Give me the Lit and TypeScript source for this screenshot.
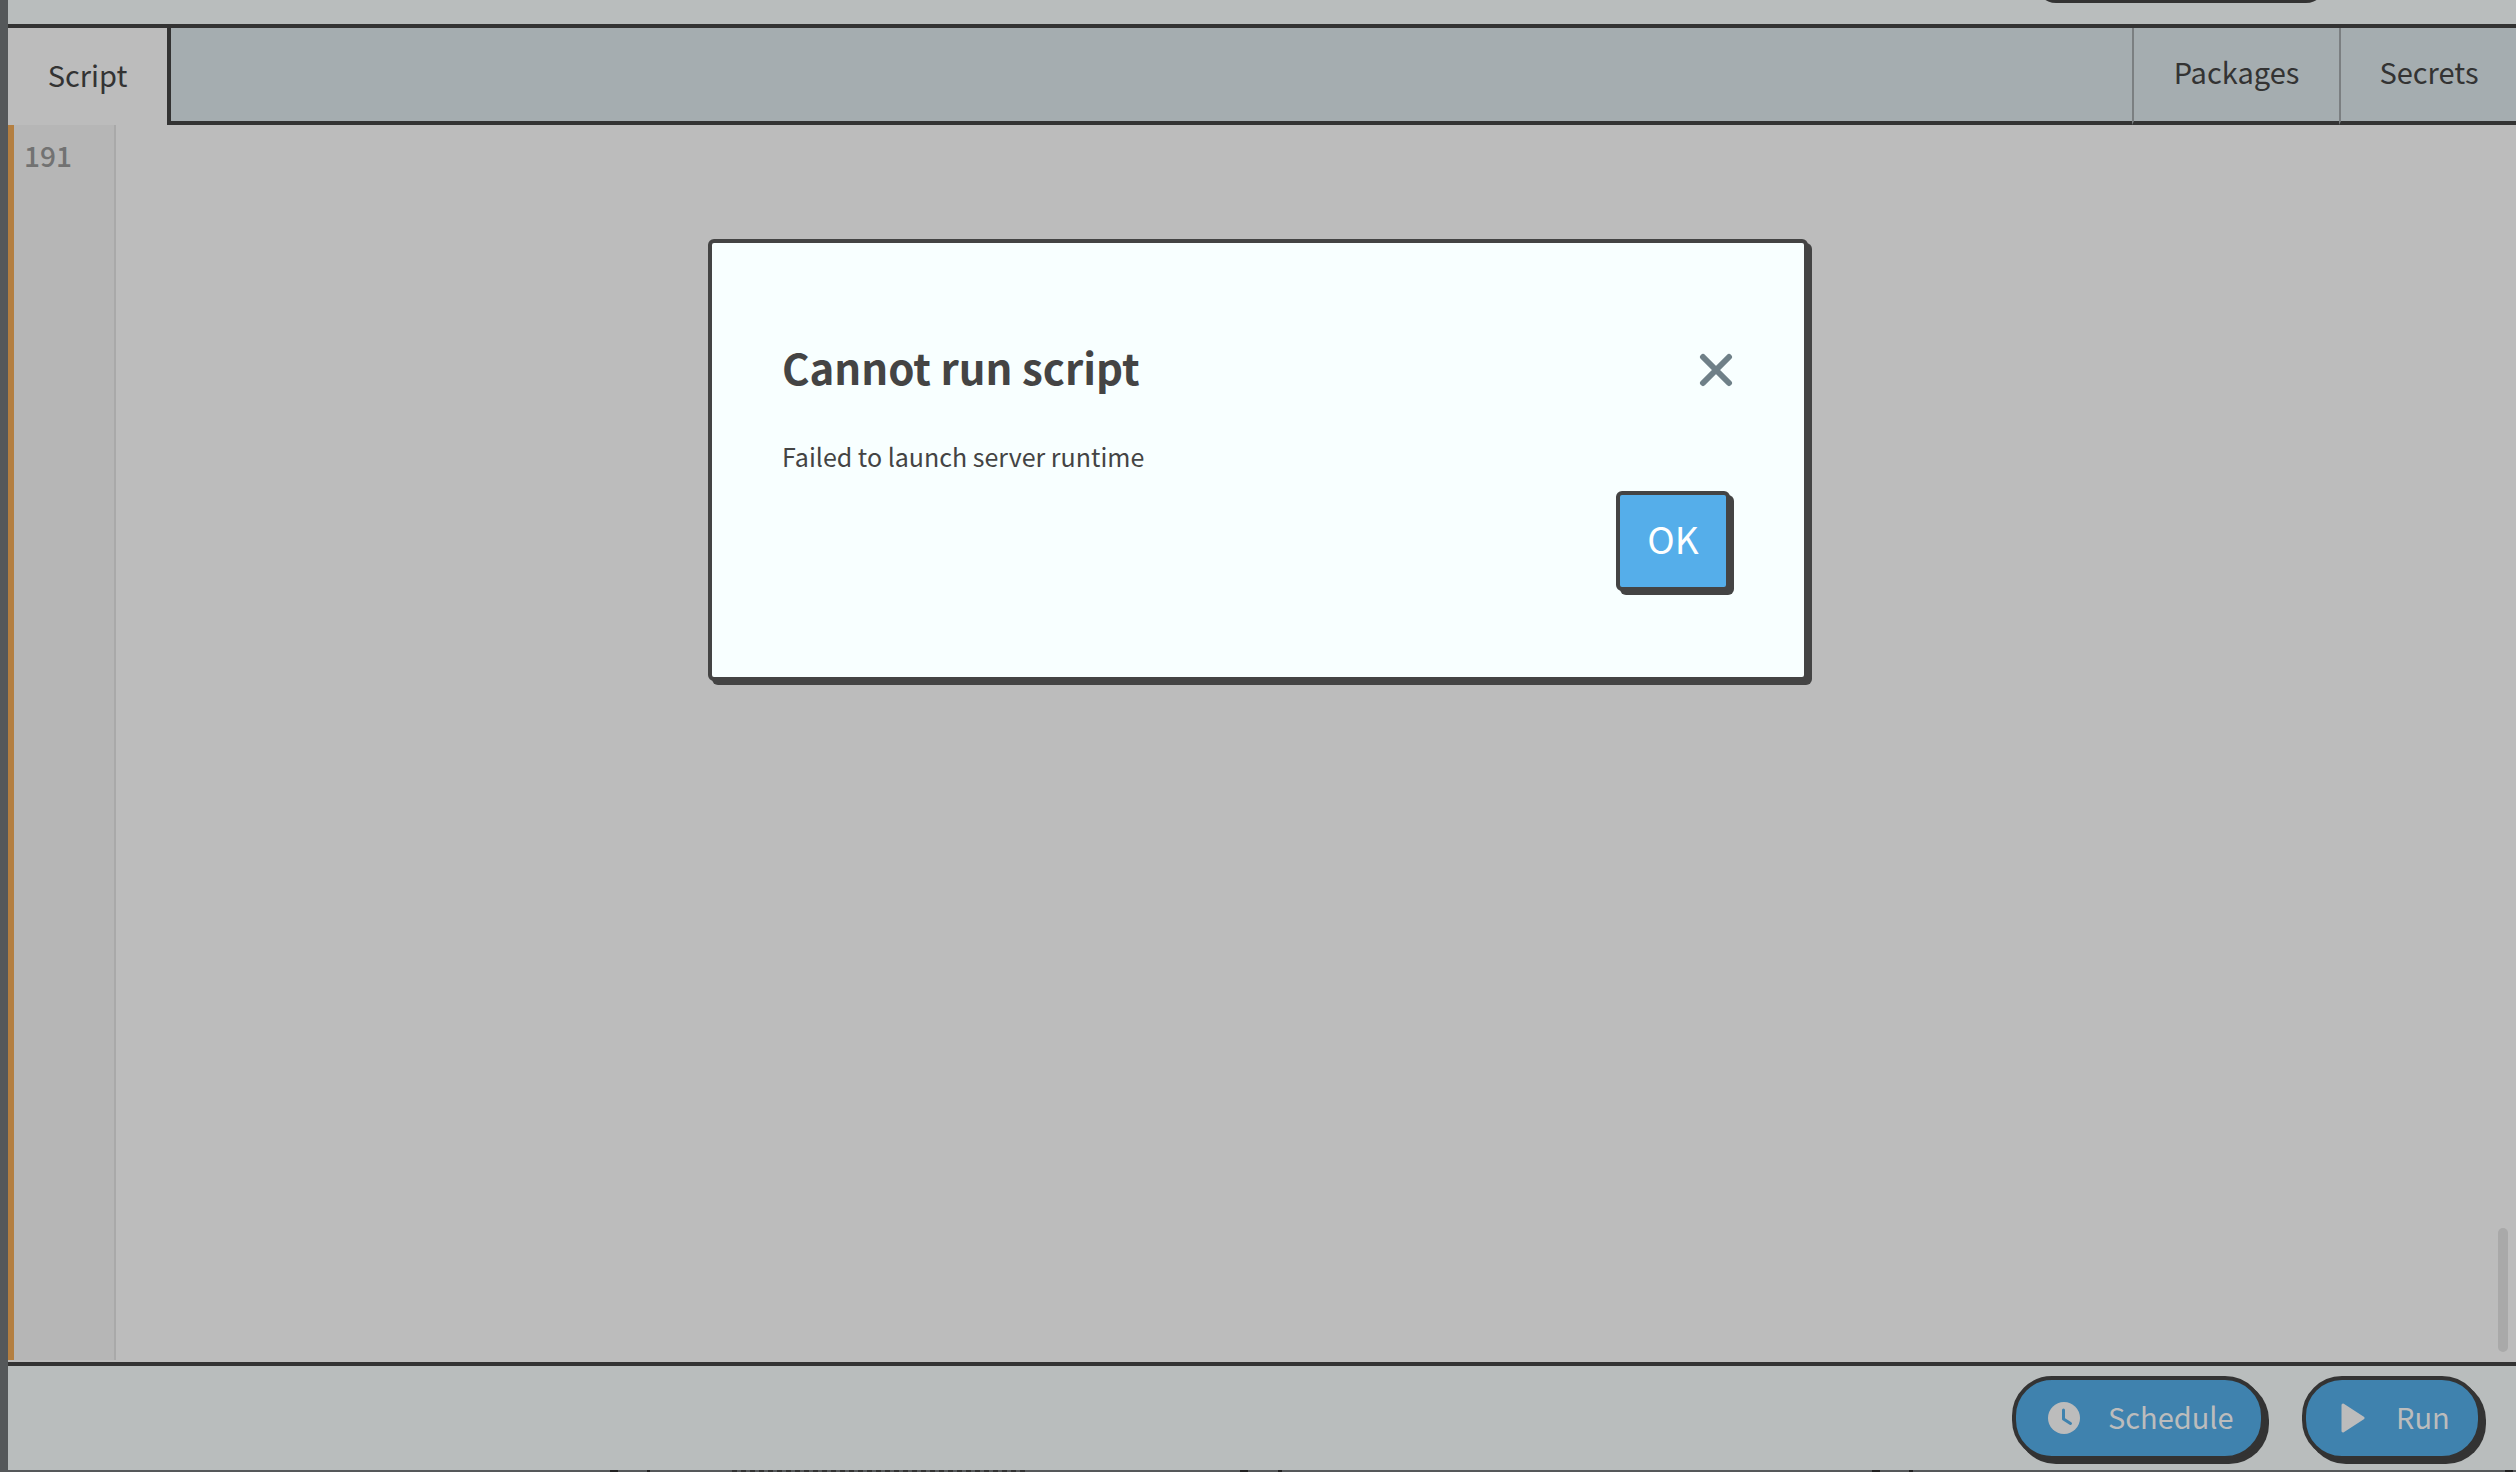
import { LitElement, html, css } from "lit";
import { customElement } from "lit/decorators.js";

const STRIP: { x: number; w: number; text?: boolean }[] = [
  { x: 610, w: 8 },
  { x: 647, w: 3 },
  { x: 732, w: 296, text: true },
  { x: 1240, w: 8 },
  { x: 1278, w: 4 },
  { x: 1872, w: 8 },
  { x: 1909, w: 4 },
  { x: 2505, w: 8 },
];

@customElement("app-root")
export class AppRoot extends LitElement {
  static styles = css`
    :host {
      display: flex;
      width: 2516px;
      height: 1472px;
      overflow: hidden;
      position: relative;
      font-family: "Noto Sans CJK JP", "Noto Sans", sans-serif;
      color: #333;
      background: #b9bdbd;
    }
    .rail { width: 8px; background: #55585a; flex: none; }
    .main { flex: 1; display: flex; flex-direction: column; min-width: 0; }
    .top {
      height: 24px; flex: none; background: #b9bdbd; overflow: hidden;
      display: flex; justify-content: flex-end; align-items: flex-start;
      padding-right: 190px;
    }
    .pill {
      width: 290px; height: 40px; flex: none; margin-top: -37px; background: #333;
      border-radius: 20px;
    }
    .tabs {
      height: 97px; flex: none; display: flex;
      border-top: 4px solid #333;
      background: #a5adb0;
    }
    .tab {
      display: flex; align-items: center; justify-content: center;
      font-size: 29px; line-height: 1; padding-bottom: 5px; box-sizing: border-box;
    }
    .tab.active {
      width: 163px; background: #bcbcbc; flex: none;
      border-right: 4px solid #333;
    }
    .tabfill { flex: 1; border-bottom: 4px solid #333; }
    .tab.side {
      border-left: 2px solid #7b7f81;
      border-bottom: 4px solid #333;
      padding-bottom: 7px;
    }
    .packages { width: 207px; }
    .secrets { width: 177px; padding-left: 1px; }
    .editor { flex: 1; display: flex; background: #bcbcbc; position: relative; min-height: 0; }
    .gutter {
      width: 108px; flex: none; box-sizing: border-box;
      margin-bottom: 2px;
      border-left: 6px solid #b47f41;
      border-right: 2px solid #a9a9a9;
      background: #b6b6b6;
      padding: 14px 0 0 10px;
      color: #727272; font-size: 28px; font-weight: 500; line-height: 32px;
    }
    .scroll {
      position: absolute; right: 8px; bottom: 10px;
      width: 10px; height: 124px; border-radius: 5px; background: #a9a9a9;
    }
    .footer {
      height: 108px; flex: none; box-sizing: border-box;
      border-top: 4px solid #333;
      background: #b9bdbd;
      display: flex; justify-content: flex-end; align-items: flex-start;
      padding: 10px 34px 0 0; gap: 37px;
    }
    .btn {
      box-sizing: border-box; height: 84px;
      display: flex; align-items: center;
      background: #3f82ae;
      border: 4px solid #333; border-radius: 40px;
      box-shadow: 4px 4px 0 #333;
      color: #bcbcbc; font-size: 29px; line-height: 1;
    }
    .btn span { padding-bottom: 4px; }
    .schedule { width: 253px; padding-left: 32px; gap: 28px; }
    .run { width: 180px; padding-left: 35px; gap: 31px; }
    .btn svg { flex: none; display: block; }
    .strip { height: 2px; background: #55585a; flex: none; position: relative; }
    .seg { position: absolute; top: 0; height: 2px; background: #222; }
    .seg.text {
      background: repeating-linear-gradient(90deg, #333 0 5px, #55585a 5px 9px);
    }
    .modal {
      position: absolute; left: 708px; top: 239px;
      width: 1100px; height: 442px; box-sizing: border-box;
      background: #f8ffff;
      border: 4px solid #444;
      border-radius: 6px;
      box-shadow: 4px 4px 0 #444;
      padding: 94px 71px 0 70px;
      display: flex; flex-direction: column;
      color: #444;
    }
    .head { display: flex; justify-content: space-between; align-items: center; height: 60px; }
    h2 { margin: 0; font-size: 42px; font-weight: 700; line-height: 60px; }
    .close { display: block; flex: none; margin-top: 6px; }
    p { margin: 39px 0 0; font-size: 25px; line-height: 40px; color: #444; }
    .actions { display: flex; justify-content: flex-end; margin: 15px 3px 0 0; }
    .ok {
      box-sizing: border-box; width: 114px; height: 100px;
      display: flex; align-items: center; justify-content: center;
      background: #55aeea; color: #fff;
      border: 4px solid #444; border-radius: 6px;
      box-shadow: 4px 4px 0 #444;
      font-size: 37px; line-height: 1; padding-bottom: 6px;
    }
  `;

  render() {
    return html`
      <div class="rail"></div>
      <div class="main">
        <div class="top"><div class="pill"></div></div>
        <div class="tabs">
          <div class="tab active">Script</div>
          <div class="tabfill"></div>
          <div class="tab side packages">Packages</div>
          <div class="tab side secrets">Secrets</div>
        </div>
        <div class="editor">
          <div class="gutter">191</div>
          <div class="scroll"></div>
        </div>
        <div class="footer">
          <div class="btn schedule">
            <svg width="32" height="32" viewBox="0 0 32 32">
              <circle cx="16" cy="16" r="16" fill="#bcbcbc"></circle>
              <path d="M15.5 8v9l7 4.5" fill="none" stroke="#3f82ae" stroke-width="3" stroke-linecap="round" stroke-linejoin="round"></path>
            </svg>
            <span>Schedule</span>
          </div>
          <div class="btn run">
            <svg width="24" height="30" viewBox="0 0 24 30">
              <path d="M2 2 L22 15 L2 28 Z" fill="#bcbcbc" stroke="#bcbcbc" stroke-width="3" stroke-linejoin="round"></path>
            </svg>
            <span>Run</span>
          </div>
        </div>
        <div class="strip">
          ${STRIP.map(
            (s) => html`<div class="seg ${s.text ? "text" : ""}" style="left:${s.x - 8}px;width:${s.w}px"></div>`
          )}
        </div>
      </div>
      <div class="modal">
        <div class="head">
          <h2>Cannot run script</h2>
          <svg class="close" width="34" height="34" viewBox="0 0 34 34">
            <path d="M4 4 L30 30 M30 4 L4 30" stroke="#6f8088" stroke-width="6" stroke-linecap="round"></path>
          </svg>
        </div>
        <p>Failed to launch server runtime</p>
        <div class="actions"><div class="ok">OK</div></div>
      </div>
    `;
  }
}
